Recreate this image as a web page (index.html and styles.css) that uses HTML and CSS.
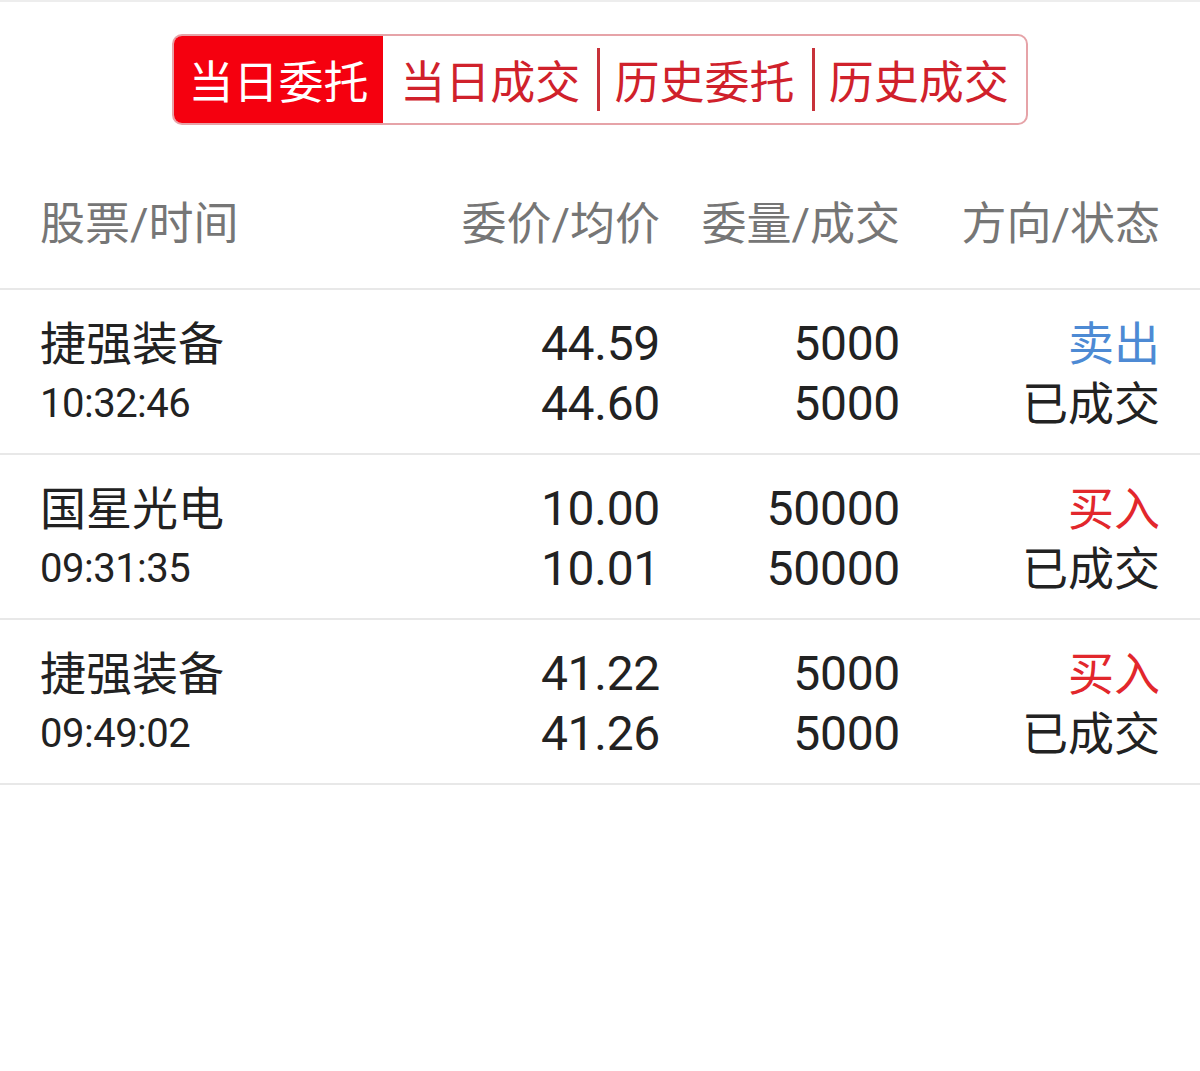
FILE: index.html
```html
<!DOCTYPE html>
<html lang="zh-CN">
  <head>
    <meta charset="UTF-8" />
    <meta name="viewport" content="width=device-width, initial-scale=1.0" />
    <title>当日委托</title>
    <link rel="stylesheet" href="styles.css">
  </head>
  <body>
    <div class="page">
      <div class="tabs">
        <div class="tab active">当日委托</div>
        <div class="tab">当日成交</div>
        <div class="tab sep">历史委托</div>
        <div class="tab sep">历史成交</div>
      </div>

      <div class="grid head">
        <div>股票/时间</div>
        <div class="r">委价/均价</div>
        <div class="r">委量/成交</div>
        <div class="r">方向/状态</div>
      </div>

      <div class="grid row">
        <div>
          <div class="name">捷强装备</div>
          <div class="time">10:32:46</div>
        </div>
        <div class="r num">
          <div>44.59</div>
          <div>44.60</div>
        </div>
        <div class="r num">
          <div>5000</div>
          <div>5000</div>
        </div>
        <div class="r">
          <div class="sell">卖出</div>
          <div class="status">已成交</div>
        </div>
      </div>

      <div class="grid row">
        <div>
          <div class="name">国星光电</div>
          <div class="time">09:31:35</div>
        </div>
        <div class="r num">
          <div>10.00</div>
          <div>10.01</div>
        </div>
        <div class="r num">
          <div>50000</div>
          <div>50000</div>
        </div>
        <div class="r">
          <div class="buy">买入</div>
          <div class="status">已成交</div>
        </div>
      </div>

      <div class="grid row">
        <div>
          <div class="name">捷强装备</div>
          <div class="time">09:49:02</div>
        </div>
        <div class="r num">
          <div>41.22</div>
          <div>41.26</div>
        </div>
        <div class="r num">
          <div>5000</div>
          <div>5000</div>
        </div>
        <div class="r">
          <div class="buy">买入</div>
          <div class="status">已成交</div>
        </div>
      </div>
    </div>
  </body>
</html>
```

FILE: styles.css
```css
:root {
  --red: #f5000f;
  --tab-text: #d0212b;
  --line: #e8e8e8;
  --dark: #222;
  --grey: #767676;
}

* {
  box-sizing: border-box;
  margin: 0;
  padding: 0;
}

body {
  background: #fff;
  font-family: Roboto, "Noto Sans CJK SC", sans-serif;
  color: var(--dark);
}

.page {
  width: 1200px;
  min-height: 1071px;
  border-top: 2px solid #ededed;
}

.tabs {
  display: flex;
  width: 856px;
  height: 91px;
  margin: 32px auto 0;
  border: 2px solid #e6a3a8;
  border-radius: 10px;
  overflow: hidden;
}

.tab {
  position: relative;
  flex: 1;
  display: flex;
  align-items: center;
  justify-content: center;
  font-size: 45px;
  color: var(--tab-text);
}

.tab.active {
  flex: 0 0 209px;
  background: var(--red);
  color: #fff;
}

.tab.sep::before {
  content: "";
  position: absolute;
  left: 0;
  top: 12px;
  bottom: 12px;
  width: 3px;
  background: #c8323a;
}

.grid {
  display: grid;
  grid-template-columns: 380px 240px 240px 260px;
  padding: 0 40px;
}

.r {
  text-align: right;
}

.head {
  height: 165px;
  padding-top: 70px;
  font-size: 45px;
  line-height: 60px;
  color: var(--grey);
  border-bottom: 2px solid var(--line);
}

.row {
  height: 165px;
  padding-top: 24px;
  line-height: 60px;
  font-size: 46px;
  border-bottom: 2px solid var(--line);
}

.num {
  font-size: 48px;
  letter-spacing: -0.3px;
}

.time {
  font-size: 40px;
  letter-spacing: -0.5px;
}

.sell {
  color: #4d8ad4;
}

.buy {
  color: #e2272c;
}
```
